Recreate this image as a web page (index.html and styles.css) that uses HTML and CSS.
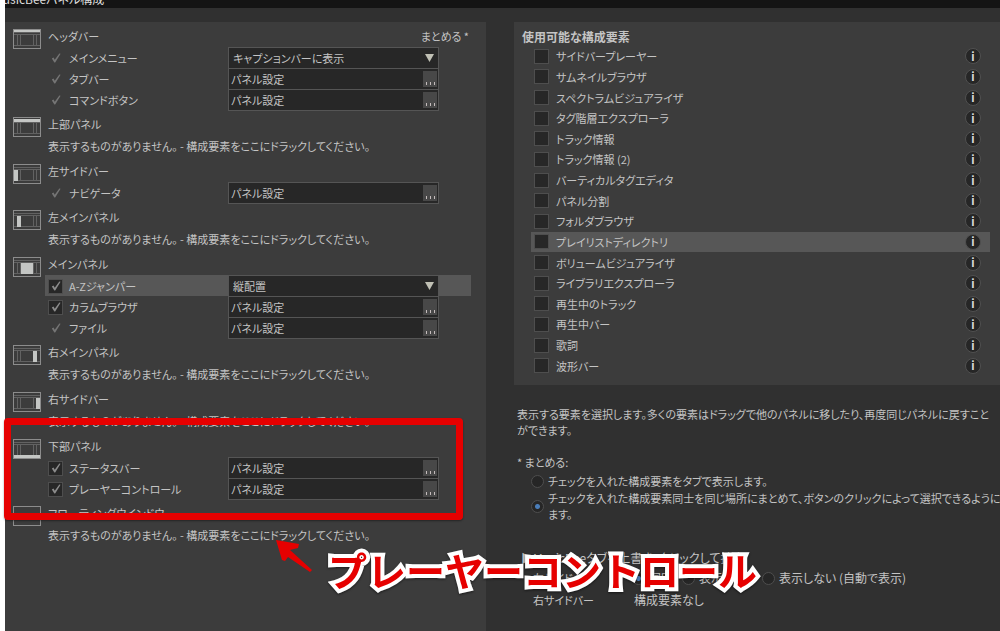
FILE: index.html
```html
<!DOCTYPE html>
<html lang="ja">
<head>
<meta charset="utf-8">
<title>MusicBeeパネル構成</title>
<link rel="stylesheet" href="styles.css">
</head>
<body>
<svg class="defs" aria-hidden="true">
  <symbol id="frame" viewBox="0 0 28 20">
    <rect x="0.5" y="0.5" width="27" height="19" fill="none" stroke="#8c8c8c"/>
    <path d="M1 3.5H27M1 5.5H27M1 16.5H27M4.500 6V16M7.500 6V16M20.500 6V16M23.500 6V16" stroke="#626262" fill="none"/>
  </symbol>
  <symbol id="tick" viewBox="0 0 12 12">
    <path d="M1 6.500L3 5.500L4.500 8L10 0.500L11.500 1L5 11.500L4 11.500Z" fill="currentColor"/>
  </symbol>
</svg>
<div class="window">
  <header class="titlebar"><h1>MusicBeeパネル構成</h1></header>
  <main class="content">
    <div class="panel layout" id="layout"></div>
    <div class="side">
      <section class="panel available">
        <h2>使用可能な構成要素</h2>
        <ul class="items" id="items"></ul>
      </section>
      <section class="help">
        <p>表示する要素を選択します。多くの要素はドラッグで他のパネルに移したり、再度同じパネルに戻すこと<br>ができます。</p>
        <fieldset class="grouping">
          <legend>* まとめる:</legend>
          <label class="choice"><input type="radio" name="group"><span>チェックを入れた構成要素をタブで表示します。</span></label>
          <label class="choice"><input type="radio" name="group" checked><span>チェックを入れた構成要素同士を同じ場所にまとめて、ボタンのクリックによって選択できるようにし<br>ます。</span></label>
        </fieldset>
        <div class="override">
          <button type="button" class="expander">▶MusicBeeタブを上書き: クリックして拡大</button>
          <div class="sidebar-row">
            <span class="name">左サイドバー</span>
            <label class="first"><input type="radio" name="left" checked>固定</label>
            <label class="second"><input type="radio" name="left">表示する</label>
            <label><input type="radio" name="left">表示しない (自動で表示)</label>
          </div>
          <div class="sidebar-row"><span class="name">右サイドバー</span><span>構成要素なし</span></div>
        </div>
      </section>
    </div>
  </main>
</div>
<div class="highlight"></div>
<svg class="arrow" viewBox="0 0 40 34" aria-hidden="true"><path d="M1 1L24 5L23 9L15 11L37 31L35 33L13 18L10 22L7 21Z" fill="#e60000"/></svg>
<div class="callout">プレーヤーコントロール</div>
<script src="app.js"></script>
</body>
</html>
```

FILE: styles.css
```css
* { box-sizing: border-box; }
body {
  margin: 0;
  min-height: 100vh;
  overflow: hidden;
  background: #fff;
  color: #c4c4c4;
  font: 11px/16px "Noto Sans CJK JP", sans-serif;
  font-feature-settings: "palt";
}
h1, h2, p, ul, fieldset, legend { margin: 0; padding: 0; border: 0; }
button, select, input { font: inherit; font-feature-settings: inherit; color: inherit; margin: 0; padding: 0; }
.defs { position: absolute; width: 0; height: 0; }
.window {
  display: flex;
  flex-direction: column;
  min-height: 100vh;
  margin-left: 5px;
  background: #303030;
  white-space: nowrap;
  overflow: hidden;
}
.titlebar { display: flex; align-items: flex-end; height: 8px; background: #141414; overflow: hidden; color: #ddd; }
.titlebar h1 { font-size: 12px; line-height: 16px; font-weight: 400; margin: 0 0 1px -12px; }
.content { flex: 1; display: grid; grid-template-columns: 481fr 486fr; column-gap: 28px; padding-top: 14px; }
.panel { background: #3c3c3c; }
.side { min-width: 0; }

.layout { display: flex; flex-direction: column; gap: 4px; padding: 4px 15px 0 8px; }
.group { display: grid; grid-template-columns: 28px 1fr; column-gap: 4px; }
.group .icon { width: 28px; height: 20px; margin-top: 3px; }
.group-head { display: flex; justify-content: space-between; height: 21px; line-height: 20px; padding: 0 2px 0 3px; }
.empty { height: 22px; line-height: 22px; padding-left: 3px; }
.row { display: grid; grid-template-columns: 183px 211px; height: 21px; }
.row.active, .item.active { background: #575757; }
.row-label { display: flex; align-items: center; gap: 6px; padding-left: 3px; }
.check { position: relative; display: grid; place-items: center; width: 15px; height: 15px; color: #8c8c8c; }
.check svg { position: absolute; width: 10px; height: 10px; pointer-events: none; }
input[type="checkbox"] { appearance: none; width: 15px; height: 15px; border: 1px solid #4e4e4e; background: #272727; }
.check.locked { color: #757575; }
.check.locked input { border-color: transparent; background: transparent; }
.field { position: relative; display: flex; align-items: center; border: 1px solid #555; background: #272727; height: 22px; }
.field input { flex: 1; min-width: 0; height: 18px; padding: 0 2px; border: 0; background: none; }
.field select { width: 100%; height: 20px; padding: 0 4px; border: 0; background: none; appearance: none; }
.field svg { position: absolute; right: 4px; width: 9px; height: 8px; pointer-events: none; }
.more { display: flex; align-items: flex-end; justify-content: center; gap: 3px; width: 14px; height: 16px; padding-bottom: 2px; margin-right: 1px; border: 0; background: #484848; }
.more i { width: 1px; height: 3px; background: #c4bcbc; }

.available { padding: 5px 0 9px; }
.available h2 { font-size: 12px; line-height: 19px; padding-left: 8px; }
.items { display: grid; grid-auto-rows: 1fr; height: 330px; padding: 0; margin: 0 10px 0 17px; list-style: none; }
.item { display: flex; align-items: center; justify-content: space-between; padding: 0 9px 0 3px; }
.item label { display: flex; align-items: center; gap: 7px; }
.info { width: 16px; height: 16px; border: 1px solid #505050; border-radius: 50%; background: #262626; color: #ddd; font-weight: 700; font-size: 11px; line-height: 13px; }

.help { padding: 21px 0 0 3px; }
.grouping { padding-top: 16px; }
.grouping legend { float: left; width: 100%; }
.choice { display: flex; align-items: center; gap: 4px; padding: 3px 0 0 14px; clear: both; }
.choice + .choice { padding-top: 1px; }
input[type="radio"] { appearance: none; flex: none; width: 13px; height: 13px; border: 1px solid #4e4e4e; border-radius: 50%; background: #262626; }
input[type="radio"]:checked { background: radial-gradient(circle, #4a7db8 0 2px, #262626 3px); }
.override { padding-top: 27px; }
.expander { display: block; border: 0; background: none; padding-left: 4px; font-size: 12px; line-height: 18px; }
.sidebar-row { display: flex; align-items: center; height: 22px; padding-left: 16px; font-size: 12px; }
.sidebar-row .name { width: 101px; font-size: 11px; }
.sidebar-row label { display: flex; align-items: center; gap: 4px; margin-left: -2px; }
.sidebar-row .first { width: 52px; }
.sidebar-row .second { width: 82px; }

.highlight { position: absolute; left: 4px; top: 418px; width: 459px; height: 102px; border: 7px solid #e60000; border-radius: 4px; pointer-events: none; box-shadow: 0 1px 2px #0006; }
.arrow { position: absolute; left: 275px; top: 539px; width: 40px; height: 34px; pointer-events: none; }
.callout {
  position: absolute;
  left: 328px;
  top: 543px;
  color: #e60000;
  font-size: 39px;
  line-height: 52px;
  font-weight: 700;
  font-feature-settings: normal;
  white-space: nowrap;
  -webkit-text-stroke: 8px #fff;
  paint-order: stroke fill;
  filter: drop-shadow(0 1px 1px #0008);
  pointer-events: none;
}
```

FILE: app.js
```js
const groups = [
  { title: "ヘッダバー", note: "まとめる *", mark: [1, 1, 26, 2], rows: [
    { label: "メインメニュー", locked: true, select: "キャプションバーに表示" },
    { label: "タブバー", locked: true },
    { label: "コマンドボタン", locked: true } ] },
  { title: "上部パネル", mark: [1, 2, 26, 3] },
  { title: "左サイドバー", mark: [1, 6, 4, 11], rows: [{ label: "ナビゲータ", locked: true }] },
  { title: "左メインパネル", mark: [4, 6, 4, 11] },
  { title: "メインパネル", mark: [8, 6, 12, 11], rows: [
    { label: "A-Zジャンパー", select: "縦配置", active: true },
    { label: "カラムブラウザ" },
    { label: "ファイル", locked: true } ] },
  { title: "右メインパネル", mark: [20, 6, 4, 11] },
  { title: "右サイドバー", mark: [23, 6, 4, 11] },
  { title: "下部パネル", mark: [1, 16, 26, 3], rows: [{ label: "ステータスバー" }, { label: "プレーヤーコントロール" }] },
  { title: "フローティングウインドウ" }
];

const available = ["サイドバープレーヤー", "サムネイルブラウザ", "スペクトラムビジュアライザ", "タグ階層エクスプローラ",
  "トラック情報", "トラック情報 (2)", "バーティカルタグエディタ", "パネル分割", "フォルダブラウザ", "プレイリストディレクトリ",
  "ボリュームビジュアライザ", "ライブラリエクスプローラ", "再生中のトラック", "再生中バー", "歌詞", "波形バー"];

function icon(mark) {
  if (!mark) {
    return '<svg class="icon" viewBox="0 0 28 20"><rect x="0.5" y="0.5" width="27" height="19" fill="none" stroke="#8c8c8c"/></svg>';
  }
  const [x, y, w, h] = mark;
  return `<svg class="icon" viewBox="0 0 28 20"><use href="#frame"/><rect x="${x}" y="${y}" width="${w}" height="${h}" fill="#c4c6c4"/></svg>`;
}

function field(row) {
  if (row.select) {
    return `<div class="field"><select aria-label="${row.label}"><option>${row.select}</option></select>
      <svg viewBox="0 0 9 8"><path d="M0 0H9L4.500 8Z" fill="#c0c0b4"/></svg></div>`;
  }
  return `<div class="field"><input type="text" value="パネル設定" readonly aria-label="${row.label}">
    <button type="button" class="more" aria-label="設定"><i></i><i></i><i></i></button></div>`;
}

function line(row) {
  return `<div class="row${row.active ? " active" : ""}"><label class="row-label">
    <span class="check${row.locked ? " locked" : ""}"><input type="checkbox" checked><svg><use href="#tick"/></svg></span>
    ${row.label}</label>${field(row)}</div>`;
}

document.getElementById("layout").innerHTML = groups.map(g => `<section class="group">${icon(g.mark)}<div>
  <div class="group-head"><span>${g.title}</span>${g.note ? `<span>${g.note}</span>` : ""}</div>
  ${g.rows ? g.rows.map(line).join("") : '<div class="empty">表示するものがありません。 - 構成要素をここにドラックしてください。</div>'}
  </div></section>`).join("");

document.getElementById("items").innerHTML = available.map((name, i) => `<li class="item${i === 9 ? " active" : ""}">
  <label><input type="checkbox">${name}</label><button type="button" class="info" aria-label="${name}の情報">i</button></li>`).join("");
```
